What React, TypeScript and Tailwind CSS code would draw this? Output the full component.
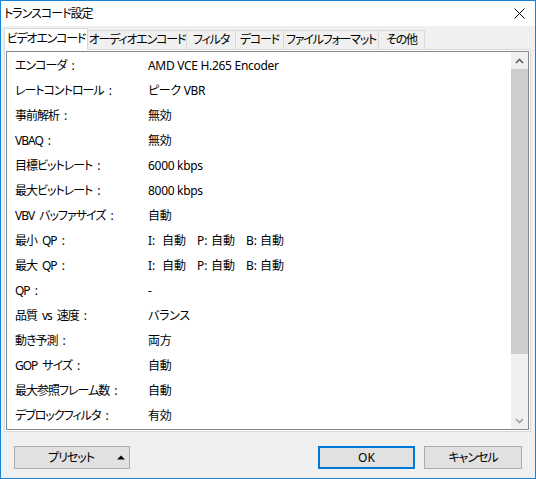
import React from 'react';

const rows: [string, string][] = [
  ['エンコーダ', 'AMD VCE H.265 Encoder'],
  ['レートコントロール', 'ピーク VBR'],
  ['事前解析', '無効'],
  ['VBAQ', '無効'],
  ['目標ビットレート', '6000 kbps'],
  ['最大ビットレート', '8000 kbps'],
  ['VBV\u2002バッファサイズ', '自動'],
  ['最小\u2002QP', 'qp'],
  ['最大\u2002QP', 'qp'],
  ['QP', '-'],
  ['品質\u2002vs\u2002速度', 'バランス'],
  ['動き予測', '両方'],
  ['GOP\u2002サイズ', '自動'],
  ['最大参照フレーム数', '自動'],
  ['デブロックフィルタ', '有効'],
];

const tabs: [string, string][] = [
  ['オーディオエンコード', 'w-[99px]'],
  ['フィルタ', 'w-[49px]'],
  ['デコード', 'w-[48px]'],
  ['ファイルフォーマット', 'w-[95px]'],
  ['その他', 'w-[46px]'],
];

const QpValue = () => (
  <span className="flex gap-[11px]">
    {['I', 'P', 'B'].map((f) => (
      <span key={f} className="flex">
        <span className="w-[14px]">{f}:</span>
        <span>自動</span>
      </span>
    ))}
  </span>
);

export default function App() {
  return (
    <div className="w-[536px] h-[479px] bg-[#f0f0f0] border border-[#1883d7] flex flex-col text-[12px] text-black overflow-hidden font-['Noto_Sans','Noto_Sans_CJK_JP',sans-serif] [font-feature-settings:'palt']">
      {/* title bar */}
      <div className="h-[25px] shrink-0 bg-white flex items-center justify-between pl-[3px] pr-[10px]">
        <span className="leading-none tracking-[-1px]">トランスコード設定</span>
        <svg width="11" height="11" viewBox="0 0 11 11">
          <path d="M0.5 0.5 L10.5 10.5 M10.5 0.5 L0.5 10.5" stroke="#000" strokeWidth="1" />
        </svg>
      </div>

      <div className="flex-1 flex flex-col pl-[3px] pr-[4px] pt-[1px]">
        {/* tabs */}
        <div className="flex items-end h-[22px] shrink-0 relative z-10 tracking-[-1.2px]">
          <div className="w-[84px] h-[22px] bg-white border border-b-0 border-[#d9d9d9] flex items-center justify-center -mb-px pb-px whitespace-nowrap">
            ビデオエンコード
          </div>
          {tabs.map(([t, w]) => (
            <div
              key={t}
              className={`${w} h-[19px] bg-[#f0f0f0] border border-b-0 border-l-0 border-[#d9d9d9] flex items-center justify-center whitespace-nowrap`}
            >
              {t}
            </div>
          ))}
        </div>

        {/* panel */}
        <div className="h-[383px] shrink-0 bg-white border border-[#d9d9d9] p-px flex">
          <div className="flex-1 border border-[#828790] flex overflow-hidden">
            <div className="flex-1 pl-[8px] pt-[1px] overflow-hidden">
              {rows.map(([k, v]) => (
                <div key={k} className="h-[25px] flex items-center whitespace-pre">
                  <span className="w-[133px] shrink-0 flex">
                    <span className="tracking-[-1px]">{k}</span>
                    <span className="ml-[5px]">:</span>
                  </span>
                  {v === 'qp' ? <QpValue /> : <span className="tracking-[-0.3px]">{v}</span>}
                </div>
              ))}
            </div>
            {/* scrollbar */}
            <div className="w-[17px] shrink-0 bg-[#f0f0f0] flex flex-col">
              <div className="h-[17px] flex items-center justify-center">
                <svg width="9" height="6" viewBox="0 0 9 6">
                  <path d="M1 5 L4.5 1.5 L8 5" fill="none" stroke="#606060" strokeWidth="1.6" />
                </svg>
              </div>
              <div className="h-[285px] bg-[#cdcdcd]" />
              <div className="flex-1" />
              <div className="h-[17px] flex items-center justify-center">
                <svg width="9" height="6" viewBox="0 0 9 6">
                  <path d="M1 1 L4.5 4.5 L8 1" fill="none" stroke="#a0a0a0" strokeWidth="1.6" />
                </svg>
              </div>
            </div>
          </div>
        </div>

        {/* buttons */}
        <div className="flex items-start pt-[14px] pl-[10px] tracking-[-1px]">
          <button className="w-[116px] h-[23px] bg-[#e1e1e1] border border-[#adadad] relative flex items-center justify-center">
            <span className="-ml-[2px]">プリセット</span>
            <svg width="8" height="5" viewBox="0 0 8 5" className="absolute right-[4px] top-[8px]">
              <path d="M0 4.5 L4 0.5 L8 4.5 Z" fill="#000" />
            </svg>
          </button>
          <button className="ml-[188px] w-[97px] h-[23px] bg-[#e1e1e1] border-2 border-[#0078d7] flex items-center justify-center tracking-normal">
            OK
          </button>
          <button className="ml-[9px] w-[98px] h-[23px] bg-[#e1e1e1] border border-[#adadad] flex items-center justify-center">
            キャンセル
          </button>
        </div>
      </div>
    </div>
  );
}
